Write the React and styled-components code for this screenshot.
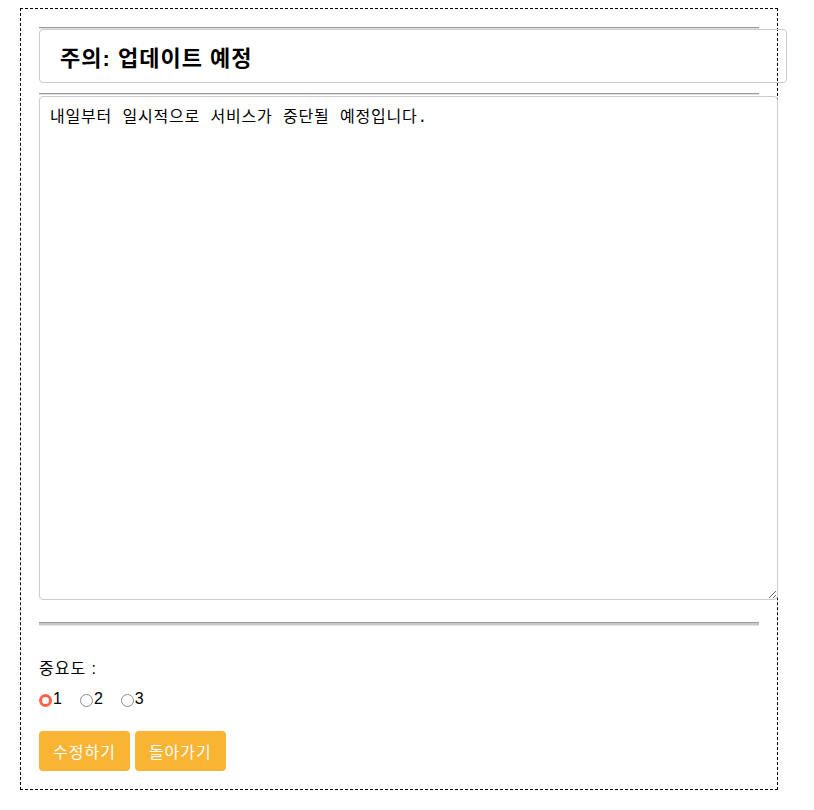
import React, { useState } from 'react';
import styled, { createGlobalStyle } from 'styled-components';

const GlobalStyle = createGlobalStyle`
  body {
    margin: 8px;
    background: #fff;
    font-family: "Liberation Sans", "Noto Sans CJK KR", sans-serif;
    color: #000;
  }
`;

const Container = styled.div`
  width: 720px;
  margin-left: 12px;
  padding: 10px 18px 18px;
  border: 1px dashed #000;
  display: flex;
  flex-direction: column;
  align-items: flex-start;
`;

const Rule = styled.hr`
  align-self: stretch;
  margin: ${({ $top }) => $top}px 0 0;
  height: ${({ $thick }) => ($thick ? '2px' : '0')};
  border: 0;
  border-top: 1px solid #9a9a9a;
  border-bottom: 1px solid #e2e2e2;
  background: ${({ $thick }) => ($thick ? '#c8c8c8' : 'transparent')};
`;

const Title = styled.h2`
  box-sizing: border-box;
  width: 748px;
  height: 54px;
  margin: 0;
  padding: 0 20px;
  display: flex;
  align-items: center;
  border: 1px solid #ccc;
  border-radius: 4px;
  font-size: 22px;
  letter-spacing: 1px;
  font-weight: bold;
`;

const Body = styled.textarea`
  box-sizing: border-box;
  width: 739px;
  height: 504px;
  margin: 1px 0 0;
  padding: 10px;
  border: 1px solid #ccc;
  border-radius: 4px;
  font-family: "Liberation Mono", "Noto Sans CJK KR", monospace;
  font-size: 16px;
  letter-spacing: 0.8px;
  line-height: 22px;
  color: #000;
  resize: both;
  outline: none;
`;

const FieldLabel = styled.div`
  margin-top: 33px;
  font-size: 16px;
  letter-spacing: 1px;
  line-height: 20px;
`;

const RadioRow = styled.div`
  display: flex;
  margin-top: 10px;
  font-size: 16px;
  line-height: 20px;
`;

const RadioOption = styled.label`
  display: inline-flex;
  align-items: center;
  margin-right: 18px;
  cursor: pointer;
`;

const RadioInput = styled.input`
  appearance: none;
  box-sizing: border-box;
  width: 13px;
  height: 13px;
  margin: 2px 1px 0 0;
  border: 1px solid #8a8a8a;
  border-radius: 50%;
  background: #fff;

  &:checked {
    border: 3.5px solid #ff6347;
  }
`;

const Actions = styled.div`
  display: flex;
  gap: 5px;
  margin-top: 22px;
`;

const Button = styled.button`
  height: 40px;
  padding: 0 14px;
  border: none;
  border-radius: 4px;
  background: #fab433;
  color: #fff;
  font-family: "Liberation Sans", "Noto Sans CJK KR", sans-serif;
  font-size: 16px;
  letter-spacing: 1px;
  cursor: pointer;
`;

export default function App() {
  const [priority, setPriority] = useState('1');
  const [content, setContent] = useState('내일부터 일시적으로 서비스가 중단될 예정입니다.');

  return (
    <>
      <GlobalStyle />
      <Container>
        <Rule $top={8} />
        <Title>주의: 업데이트 예정</Title>
        <Rule $top={10} />
        <Body value={content} onChange={(e) => setContent(e.target.value)} />
        <Rule $top={22} $thick />
        <FieldLabel>중요도 :</FieldLabel>
        <RadioRow>
          {['1', '2', '3'].map((v) => (
            <RadioOption key={v}>
              <RadioInput
                type="radio"
                name="priority"
                value={v}
                checked={priority === v}
                onChange={() => setPriority(v)}
              />
              {v}
            </RadioOption>
          ))}
        </RadioRow>
        <Actions>
          <Button>수정하기</Button>
          <Button>돌아가기</Button>
        </Actions>
      </Container>
    </>
  );
}
